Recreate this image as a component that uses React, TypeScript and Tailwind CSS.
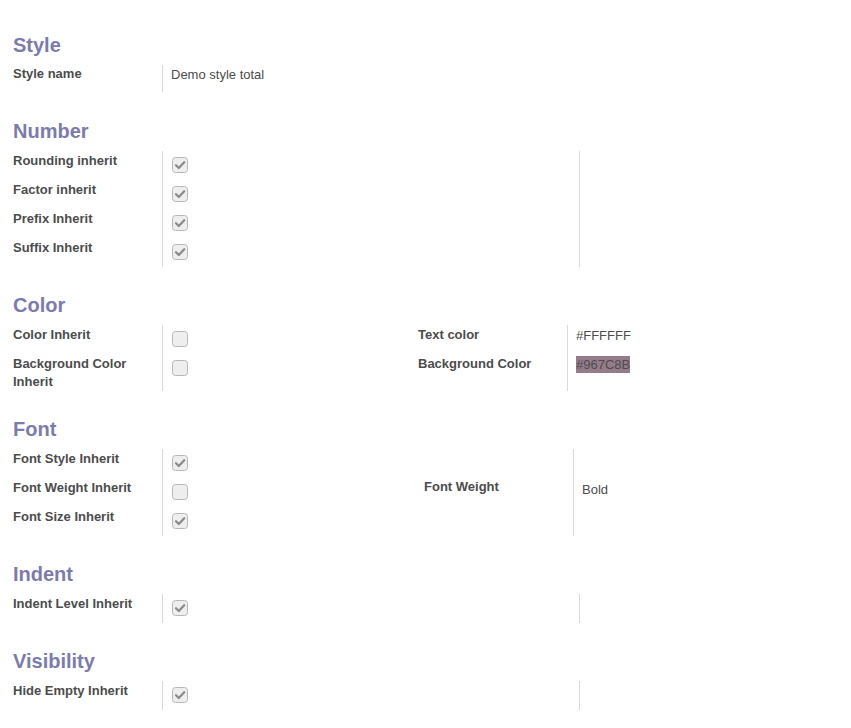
import React from "react";

const font = { fontFamily: '"Liberation Sans", Arial, sans-serif' };

function Check({ on }: { on: boolean }) {
  return (
    <svg width="16" height="16" viewBox="0 0 16 16" className="block">
      <rect x="0.5" y="0.5" width="15" height="15" rx="3" fill="#eeeeee" stroke="#b8b8b8" />
      {on && (
        <path d="M4 8.2 L6.8 11 L12.2 5.2" fill="none" stroke="#8a8a8a" strokeWidth="2.2" strokeLinecap="round" strokeLinejoin="round" />
      )}
    </svg>
  );
}

function Heading({ children, top }: { children: React.ReactNode; top: string }) {
  return (
    <div className={`${top} mb-[8px] h-[24px] text-[20px] leading-[24px] font-bold text-[#7c7bad]`}>
      {children}
    </div>
  );
}

type Row = { label: React.ReactNode; value: React.ReactNode };

function LeftGroup({ rows, width }: { rows: Row[]; width: string }) {
  return (
    <div className={`grid grid-cols-[149px_1fr] shrink-0 ${width}`}>
      {rows.map((r, i) => (
        <React.Fragment key={i}>
          <div className="min-h-[29px] pt-[1px] text-[13px] leading-[18px] font-bold text-[#4c4c4c]">{r.label}</div>
          <div className="min-h-[29px] border-l border-[#d9d9d9] pl-[9px] pt-[6px]">{r.value}</div>
        </React.Fragment>
      ))}
    </div>
  );
}

function EmptyRight() {
  return (
    <div className="flex">
      <div className="w-[149px]" />
      <div className="border-l border-[#d9d9d9]" />
    </div>
  );
}

export default function App() {
  return (
    <div className="min-h-screen bg-white px-[13px] pb-[18px]" style={font}>
      <Heading top="mt-[33px]">Style</Heading>
      <div className="grid grid-cols-[149px_1fr] w-[417px]">
        <div className="h-[27px] text-[13px] leading-[18px] font-bold text-[#4c4c4c]">Style name</div>
        <div className="h-[27px] border-l border-[#d9d9d9] pl-[8px] pt-[1px] text-[13px] leading-[18px] text-[#4c4c4c]">
          Demo style total
        </div>
      </div>

      <Heading top="mt-[27px]">Number</Heading>
      <div className="flex">
        <LeftGroup
          width="w-[417px]"
          rows={[
            { label: "Rounding inherit", value: <Check on /> },
            { label: "Factor inherit", value: <Check on /> },
            { label: "Prefix Inherit", value: <Check on /> },
            { label: "Suffix Inherit", value: <Check on /> },
          ]}
        />
        <EmptyRight />
      </div>

      <Heading top="mt-[26px]">Color</Heading>
      <div className="flex">
        <LeftGroup
          width="w-[405px]"
          rows={[
            { label: "Color Inherit", value: <Check on={false} /> },
            { label: <>Background Color<br />Inherit</>, value: <Check on={false} /> },
          ]}
        />
        <div className="flex text-[13px] leading-[18px] text-[#4c4c4c]">
          <div className="w-[149px] font-bold">
            <div className="h-[29px] pt-[1px]">Text color</div>
            <div className="h-[29px] pt-[1px]">Background Color</div>
          </div>
          <div className="border-l border-[#d9d9d9] pl-[8px]">
            <div className="h-[29px] pt-[2px]">#FFFFFF</div>
            <div className="h-[29px] pt-[2px]">
              <span className="bg-[#967c8b] py-[1px]">#967C8B</span>
            </div>
          </div>
        </div>
      </div>

      <Heading top="mt-[26px]">Font</Heading>
      <div className="flex">
        <LeftGroup
          width="w-[411px]"
          rows={[
            { label: "Font Style Inherit", value: <Check on /> },
            { label: "Font Weight Inherit", value: <Check on={false} /> },
            { label: "Font Size Inherit", value: <Check on /> },
          ]}
        />
        <div className="flex text-[13px] leading-[18px] text-[#4c4c4c]">
          <div className="w-[149px] flex items-center font-bold pb-[12px]">Font Weight</div>
          <div className="border-l border-[#d9d9d9] pl-[8px] flex items-center pb-[6px]">Bold</div>
        </div>
      </div>

      <Heading top="mt-[26px]">Indent</Heading>
      <div className="flex">
        <LeftGroup width="w-[417px]" rows={[{ label: "Indent Level Inherit", value: <Check on /> }]} />
        <EmptyRight />
      </div>

      <Heading top="mt-[26px]">Visibility</Heading>
      <div className="flex">
        <LeftGroup width="w-[417px]" rows={[{ label: "Hide Empty Inherit", value: <Check on /> }]} />
        <EmptyRight />
      </div>
    </div>
  );
}
